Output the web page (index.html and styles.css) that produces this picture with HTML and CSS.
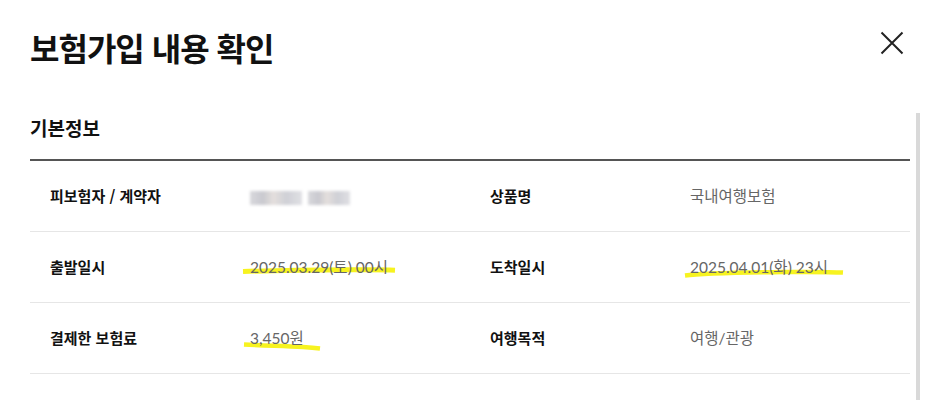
FILE: index.html
```html
<!DOCTYPE html>
<html lang="ko">
<head>
<meta charset="utf-8">
<title>보험가입 내용 확인</title>
<link rel="stylesheet" href="styles.css">
</head>
<body>
<div class="modal">
  <header class="modal-head">
    <h1 class="modal-title">보험가입 내용 확인</h1>
    <button class="close-btn" type="button" aria-label="닫기">
      <svg width="24" height="24" viewBox="0 0 24 24"><path d="M1.5 1.5 L22.5 22.5 M22.5 1.5 L1.5 22.5" stroke="#222" stroke-width="2" fill="none"/></svg>
    </button>
  </header>
  <div class="scroll-area">
    <div class="scroll-content">
      <h2 class="section-title">기본정보</h2>
      <div class="info-table">
        <div class="info-row">
          <div class="info-label">피보험자 / 계약자</div>
          <div class="info-value"><span class="blurred"><span class="blur-a"></span><span class="blur-b"></span></span></div>
          <div class="info-label">상품명</div>
          <div class="info-value">국내여행보험</div>
        </div>
        <div class="info-row">
          <div class="info-label">출발일시</div>
          <div class="info-value"><span class="marked"><svg class="mark mark-1" width="160" height="12" viewBox="0 0 160 12"><path d="M1 6.5 C30 5.5 70 5 110 4.8 C130 4.7 145 4.8 153 5.2" stroke="#f7f320" stroke-width="5" fill="none" stroke-linecap="butt"/></svg><span class="mark-text">2025.03.29(토) 00시</span></span></div>
          <div class="info-label">도착일시</div>
          <div class="info-value"><span class="marked"><svg class="mark mark-2" width="165" height="12" viewBox="0 0 165 12"><path d="M1 8.5 C20 6 60 5.5 100 5 C130 4.8 150 5 159 5.6" stroke="#f7f320" stroke-width="4.5" fill="none" stroke-linecap="butt"/></svg><span class="mark-text">2025.04.01(화) 23시</span></span></div>
        </div>
        <div class="info-row">
          <div class="info-label">결제한 보험료</div>
          <div class="info-value"><span class="marked"><svg class="mark mark-3" width="85" height="14" viewBox="0 0 85 14"><path d="M1 4.5 C20 5.5 40 6 60 7 C68 7.5 73 8 77 8.5" stroke="#f7f320" stroke-width="4.5" fill="none" stroke-linecap="butt"/></svg><span class="mark-text">3,450원</span></span></div>
          <div class="info-label">여행목적</div>
          <div class="info-value">여행/관광</div>
        </div>
      </div>
    </div>
    <div class="scrollbar"></div>
  </div>
</div>
</body>
</html>
```
FILE: styles.css
```css
* { box-sizing: border-box; }
html, body { margin: 0; padding: 0; background: #fff; }
body {
  font-family: "Noto Sans CJK KR", "Noto Sans", sans-serif;
  color: #111;
}
.modal {
  width: 930px;
  height: 400px;
  overflow: hidden;
  display: flex;
  flex-direction: column;
}
.modal-head {
  height: 113px;
  display: flex;
  justify-content: space-between;
  align-items: flex-start;
  padding: 0 26px 0 30px;
}
.modal-title {
  margin: 23px 0 0;
  font-size: 32px;
  font-weight: 700;
  line-height: 48px;
  letter-spacing: -1px;
  color: #111;
}
.close-btn {
  margin-top: 31px;
  width: 24px;
  height: 24px;
  padding: 0;
  border: 0;
  background: none;
  display: block;
}
.close-btn svg { display: block; }
.scroll-area {
  flex: 1;
  display: flex;
}
.scroll-content {
  flex: 1;
  padding: 0 6px 0 30px;
}
.scrollbar {
  width: 4px;
  margin-right: 10px;
  background: #d9d9d9;
}
.section-title {
  margin: 0 0 16px;
  font-size: 19px;
  font-weight: 700;
  line-height: 30px;
  color: #111;
}
.info-table {
  border-top: 2px solid #555;
}
.info-row {
  display: grid;
  grid-template-columns: 200px 240px 200px 1fr;
  align-items: center;
  height: 71px;
  padding-left: 20px;
  border-bottom: 1px solid #e6e6e6;
}
.info-label {
  font-size: 15px;
  font-weight: 700;
  color: #111;
  line-height: 20px;
}
.info-value {
  font-family: Lato, "Noto Sans CJK KR", sans-serif;
  font-size: 15.5px;
  color: #666;
  line-height: 20px;
}
.marked {
  position: relative;
  display: inline-block;
}
.mark-text { position: relative; }
.mark {
  position: absolute;
  display: block;
}
.mark-1 { left: -8px; top: 8px; }
.mark-2 { left: -6px; top: 10px; }
.mark-3 { left: -7px; top: 12px; }
.blurred {
  display: inline-flex;
  gap: 6px;
  vertical-align: middle;
  filter: blur(1.5px);
}
.blur-a, .blur-b {
  display: block;
  height: 14px;
  background: linear-gradient(90deg, #d8d8dc 0%, #c9c9cf 25%, #e4dfdd 45%, #cfd0d6 70%, #e0e0e4 100%);
}
.blur-a { width: 52px; }
.blur-b { width: 42px; }
```
